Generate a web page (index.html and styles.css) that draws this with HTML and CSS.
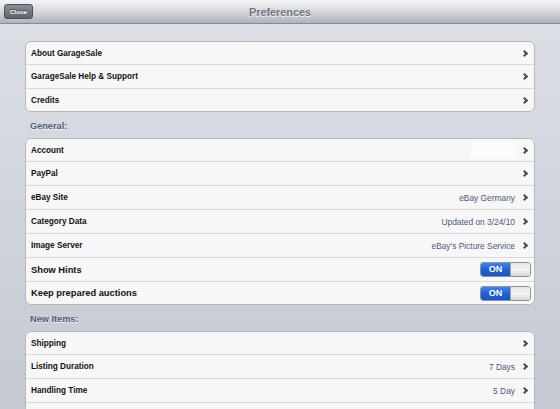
FILE: index.html
```html
<!DOCTYPE html>
<html lang="en">
<head>
    <meta charset="UTF-8">
    <meta name="viewport" content="width=device-width, initial-scale=1.0">
    <title>Preferences</title>
    <link rel="stylesheet" href="styles.css">
</head>
<body>

<div class="toolbar">
    <button type="button" class="close-button">Close</button>
    <div class="title">Preferences</div>
</div>

<div class="content">
    <div class="group">
        <div class="row"><span class="label">About GarageSale</span><span class="chevron"></span></div>
        <div class="row"><span class="label">GarageSale Help &amp; Support</span><span class="chevron"></span></div>
        <div class="row"><span class="label">Credits</span><span class="chevron"></span></div>
    </div>

    <div class="section-title">General:</div>
    <div class="group">
        <div class="row"><span class="label">Account</span><span class="blank"></span><span class="chevron"></span></div>
        <div class="row"><span class="label">PayPal</span><span class="chevron"></span></div>
        <div class="row"><span class="label">eBay Site</span><span class="value">eBay Germany</span><span class="chevron"></span></div>
        <div class="row"><span class="label">Category Data</span><span class="value">Updated on 3/24/10</span><span class="chevron"></span></div>
        <div class="row"><span class="label">Image Server</span><span class="value">eBay's Picture Service</span><span class="chevron"></span></div>
        <div class="row"><span class="label big">Show Hints</span><span class="switch"><span class="switch-on">ON</span><span class="switch-knob"></span></span></div>
        <div class="row"><span class="label big">Keep prepared auctions</span><span class="switch"><span class="switch-on">ON</span><span class="switch-knob"></span></span></div>
    </div>

    <div class="section-title">New Items:</div>
    <div class="group">
        <div class="row"><span class="label">Shipping</span><span class="chevron"></span></div>
        <div class="row"><span class="label">Listing Duration</span><span class="value">7 Days</span><span class="chevron"></span></div>
        <div class="row"><span class="label">Handling Time</span><span class="value">5 Day</span><span class="chevron"></span></div>
        <div class="row"><span class="label"></span></div>
    </div>
</div>

</body>
</html>
```

FILE: styles.css
```css
html, body {
    margin: 0;
    height: 409px;
    overflow: hidden;
}
body {
    font-family: "Liberation Sans", Arial, sans-serif;
    background: linear-gradient(#dde0e7, #c4c9d2);
    color: #111;
}
.toolbar {
    height: 23px;
    border-bottom: 1px solid #858a94;
    background: linear-gradient(#f4f5f7, #d9dbe0 45%, #aeb2bc);
    position: relative;
    display: flex;
    align-items: center;
    justify-content: center;
}
.title {
    font-size: 10.8px;
    font-weight: bold;
    color: #6f7580;
    text-shadow: 0 1px 0 #f4f5f7;
}
.close-button {
    position: absolute;
    left: 4px;
    top: 4px;
    width: 29px;
    height: 15px;
    padding: 0;
    border: 1px solid #4b4f56;
    border-radius: 3px;
    background: linear-gradient(#8a9098, #5d636b);
    color: #fff;
    font-family: "Liberation Sans", Arial, sans-serif;
    font-size: 6.2px;
    font-weight: bold;
    text-shadow: 0 -1px 0 #3d4046;
}
.content {
    padding: 17px 25px 0 25px;
}
.group {
    background: #f7f7f7;
    border: 1px solid #b4b7bd;
    border-radius: 6px;
}
.row {
    height: 24px;
    box-sizing: border-box;
    border-top: 1px solid #d9d9d9;
    display: flex;
    align-items: center;
    padding: 0 5px 0 5px;
}
.row:first-child {
    height: 22px;
    border-top: none;
}
.row:last-child {
    height: 23px;
}
.label {
    flex: 1;
    font-size: 8.2px;
    font-weight: bold;
}
.label.big {
    font-size: 9.3px;
}
.value {
    font-size: 8.4px;
    color: #485982;
    margin-right: 7px;
}
.blank {
    width: 46px;
    height: 16px;
    margin-right: 5px;
    background: #fcfcfc;
    border-radius: 2px;
}
.chevron {
    width: 3px;
    height: 3px;
    border-top: 2px solid #4a4a4a;
    border-right: 2px solid #4a4a4a;
    transform: rotate(45deg);
    margin-right: 2px;
}
.switch {
    display: flex;
    width: 51px;
    height: 15px;
    box-sizing: border-box;
    border: 1px solid #8e939b;
    border-radius: 3px;
    overflow: hidden;
    margin-right: -2px;
}
.switch-on {
    width: 29px;
    background: linear-gradient(#3f86ee, #1d5fd3 55%, #1855c4);
    color: #fff;
    font-size: 9px;
    font-weight: bold;
    text-align: center;
    line-height: 13px;
}
.switch-knob {
    flex: 1;
    border-left: 1px solid #9a9ea5;
    background: linear-gradient(#e4e4e4, #f6f6f6 50%, #d6d6d6);
}
.section-title {
    height: 26px;
    box-sizing: border-box;
    padding: 9px 0 0 5px;
    font-size: 9.2px;
    font-weight: bold;
    color: #515c75;
    text-shadow: 0 1px 0 #eef0f3;
}
```
